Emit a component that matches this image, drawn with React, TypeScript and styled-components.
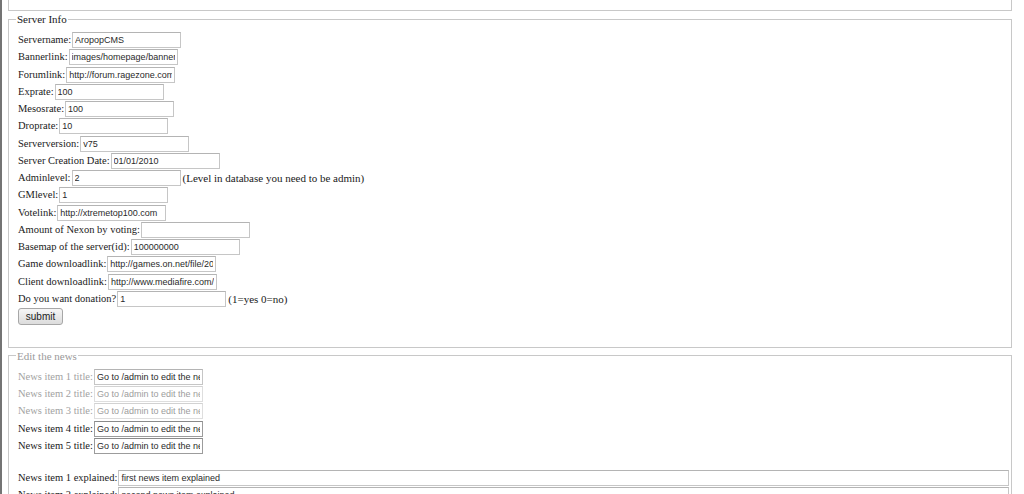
import React from 'react';
import styled, {createGlobalStyle} from "styled-components";

const GlobalStyle = createGlobalStyle`
  html, body {
    margin: 0;
    padding: 0;
    background: #fff;
  }
  body {
    font-family: "Liberation Serif", "Times New Roman", serif;
    font-size: 11px;
    color: #1a1a1a;
    overflow: hidden;
  }
`

const Page = styled.div`
  border-left: 2px solid #747474;
  padding: 0 12px 0 6px;
  min-height: 494px;
  box-sizing: border-box;
`

const TopBox = styled.div`
  height: 10px;
  border: 1px solid #c8c8c8;
  border-top: none;
`

const Fieldset = styled.fieldset<{ $top: number; $bottom: number }>`
  margin: ${p => p.$top}px 0 0 0;
  padding: 5.5px 2px ${p => p.$bottom}px 9px;
  border: 1px solid #c8c8c8;
  min-width: 0;
`

const Legend = styled.legend<{ $muted?: boolean }>`
  padding: 0 1px;
  margin-left: -2px;
  line-height: 14px;
  font-size: 11px;
  color: ${p => (p.$muted ? "#9a9a9a" : "#1a1a1a")};
`

const Row = styled.div`
  display: flex;
  align-items: center;
  height: 17.25px;
  white-space: nowrap;
`

const Label = styled.span<{ $muted?: boolean }>`
  font-size: 10.5px;
  color: ${p => (p.$muted ? "#a2a2a2" : "#1a1a1a")};
  line-height: 14px;
`

const Field = styled.input<{ $wide?: boolean; $tone?: "light" | "dark" }>`
  box-sizing: border-box;
  width: ${p => (p.$wide ? "auto" : "109px")};
  flex: ${p => (p.$wide ? "1" : "none")};
  height: 16px;
  margin: 0 0 0 1px;
  padding: 0 2px;
  border: 1px solid ${p => (p.$tone === "dark" ? "#9c9c9c" : p.$tone === "light" ? "#dedede" : "#c6c6c6")};
  border-top-color: ${p => (p.$tone === "dark" ? "#8a8a8a" : p.$tone === "light" ? "#d2d2d2" : "#b4b4b4")};
  background: #fff;
  font-family: "Liberation Sans", Arial, sans-serif;
  font-size: 9px;
  color: ${p => (p.$tone === "light" ? "#9d9d9d" : "#2a2a2a")};
  outline: none;
`

const Note = styled.span`
  margin-left: 2px;
  color: #1a1a1a;
`

const SubmitButton = styled.button`
  box-sizing: border-box;
  width: 45px;
  height: 17px;
  padding: 0;
  border: 1px solid #a7a7a7;
  border-radius: 3px;
  background: linear-gradient(#f6f6f6, #dcdcdc);
  font-family: "Liberation Sans", Arial, sans-serif;
  font-size: 10px;
  color: #222;
`

const Spacer = styled.div`
  height: 15px;
`

type Item = { label: string; value: string; note?: string };

const serverFields: Item[] = [
    {label: "Servername:", value: "AropopCMS"},
    {label: "Bannerlink:", value: "images/homepage/banner.png"},
    {label: "Forumlink:", value: "http://forum.ragezone.com/"},
    {label: "Exprate:", value: "100"},
    {label: "Mesosrate:", value: "100"},
    {label: "Droprate:", value: "10"},
    {label: "Serverversion:", value: "v75"},
    {label: "Server Creation Date:", value: "01/01/2010"},
    {label: "Adminlevel:", value: "2", note: "(Level in database you need to be admin)"},
    {label: "GMlevel:", value: "1"},
    {label: "Votelink:", value: "http://xtremetop100.com"},
    {label: "Amount of Nexon by voting:", value: ""},
    {label: "Basemap of the server(id):", value: "100000000"},
    {label: "Game downloadlink:", value: "http://games.on.net/file/20356"},
    {label: "Client downloadlink:", value: "http://www.mediafire.com/"},
    {label: "Do you want donation?", value: "1", note: "(1=yes 0=no)"},
];

const newsTitles = [
    {muted: true, tone: undefined},
    {muted: true, tone: "light" as const},
    {muted: true, tone: "light" as const},
    {muted: false, tone: "dark" as const},
    {muted: false, tone: "dark" as const},
];

function App() {
    return (
        <Page>
            <GlobalStyle/>
            <TopBox/>
            <Fieldset $top={1} $bottom={22}>
                <Legend>Server Info</Legend>
                {serverFields.map(f => (
                    <Row key={f.label}>
                        <Label>{f.label}</Label>
                        <Field defaultValue={f.value} readOnly/>
                        {f.note && <Note>{f.note}</Note>}
                    </Row>
                ))}
                <Row>
                    <SubmitButton>submit</SubmitButton>
                </Row>
            </Fieldset>
            <Fieldset $top={1} $bottom={10}>
                <Legend $muted>Edit the news</Legend>
                {newsTitles.map((n, i) => (
                    <Row key={i}>
                        <Label $muted={n.muted}>News item {i + 1} title:</Label>
                        <Field $tone={n.tone} defaultValue="Go to /admin to edit the news" readOnly/>
                    </Row>
                ))}
                <Spacer/>
                <Row>
                    <Label>News item 1 explained:</Label>
                    <Field $wide defaultValue="first news item explained" readOnly/>
                </Row>
                <Row>
                    <Label>News item 2 explained:</Label>
                    <Field $wide defaultValue="second news item explained" readOnly/>
                </Row>
            </Fieldset>
        </Page>
    );
}

export default App;
